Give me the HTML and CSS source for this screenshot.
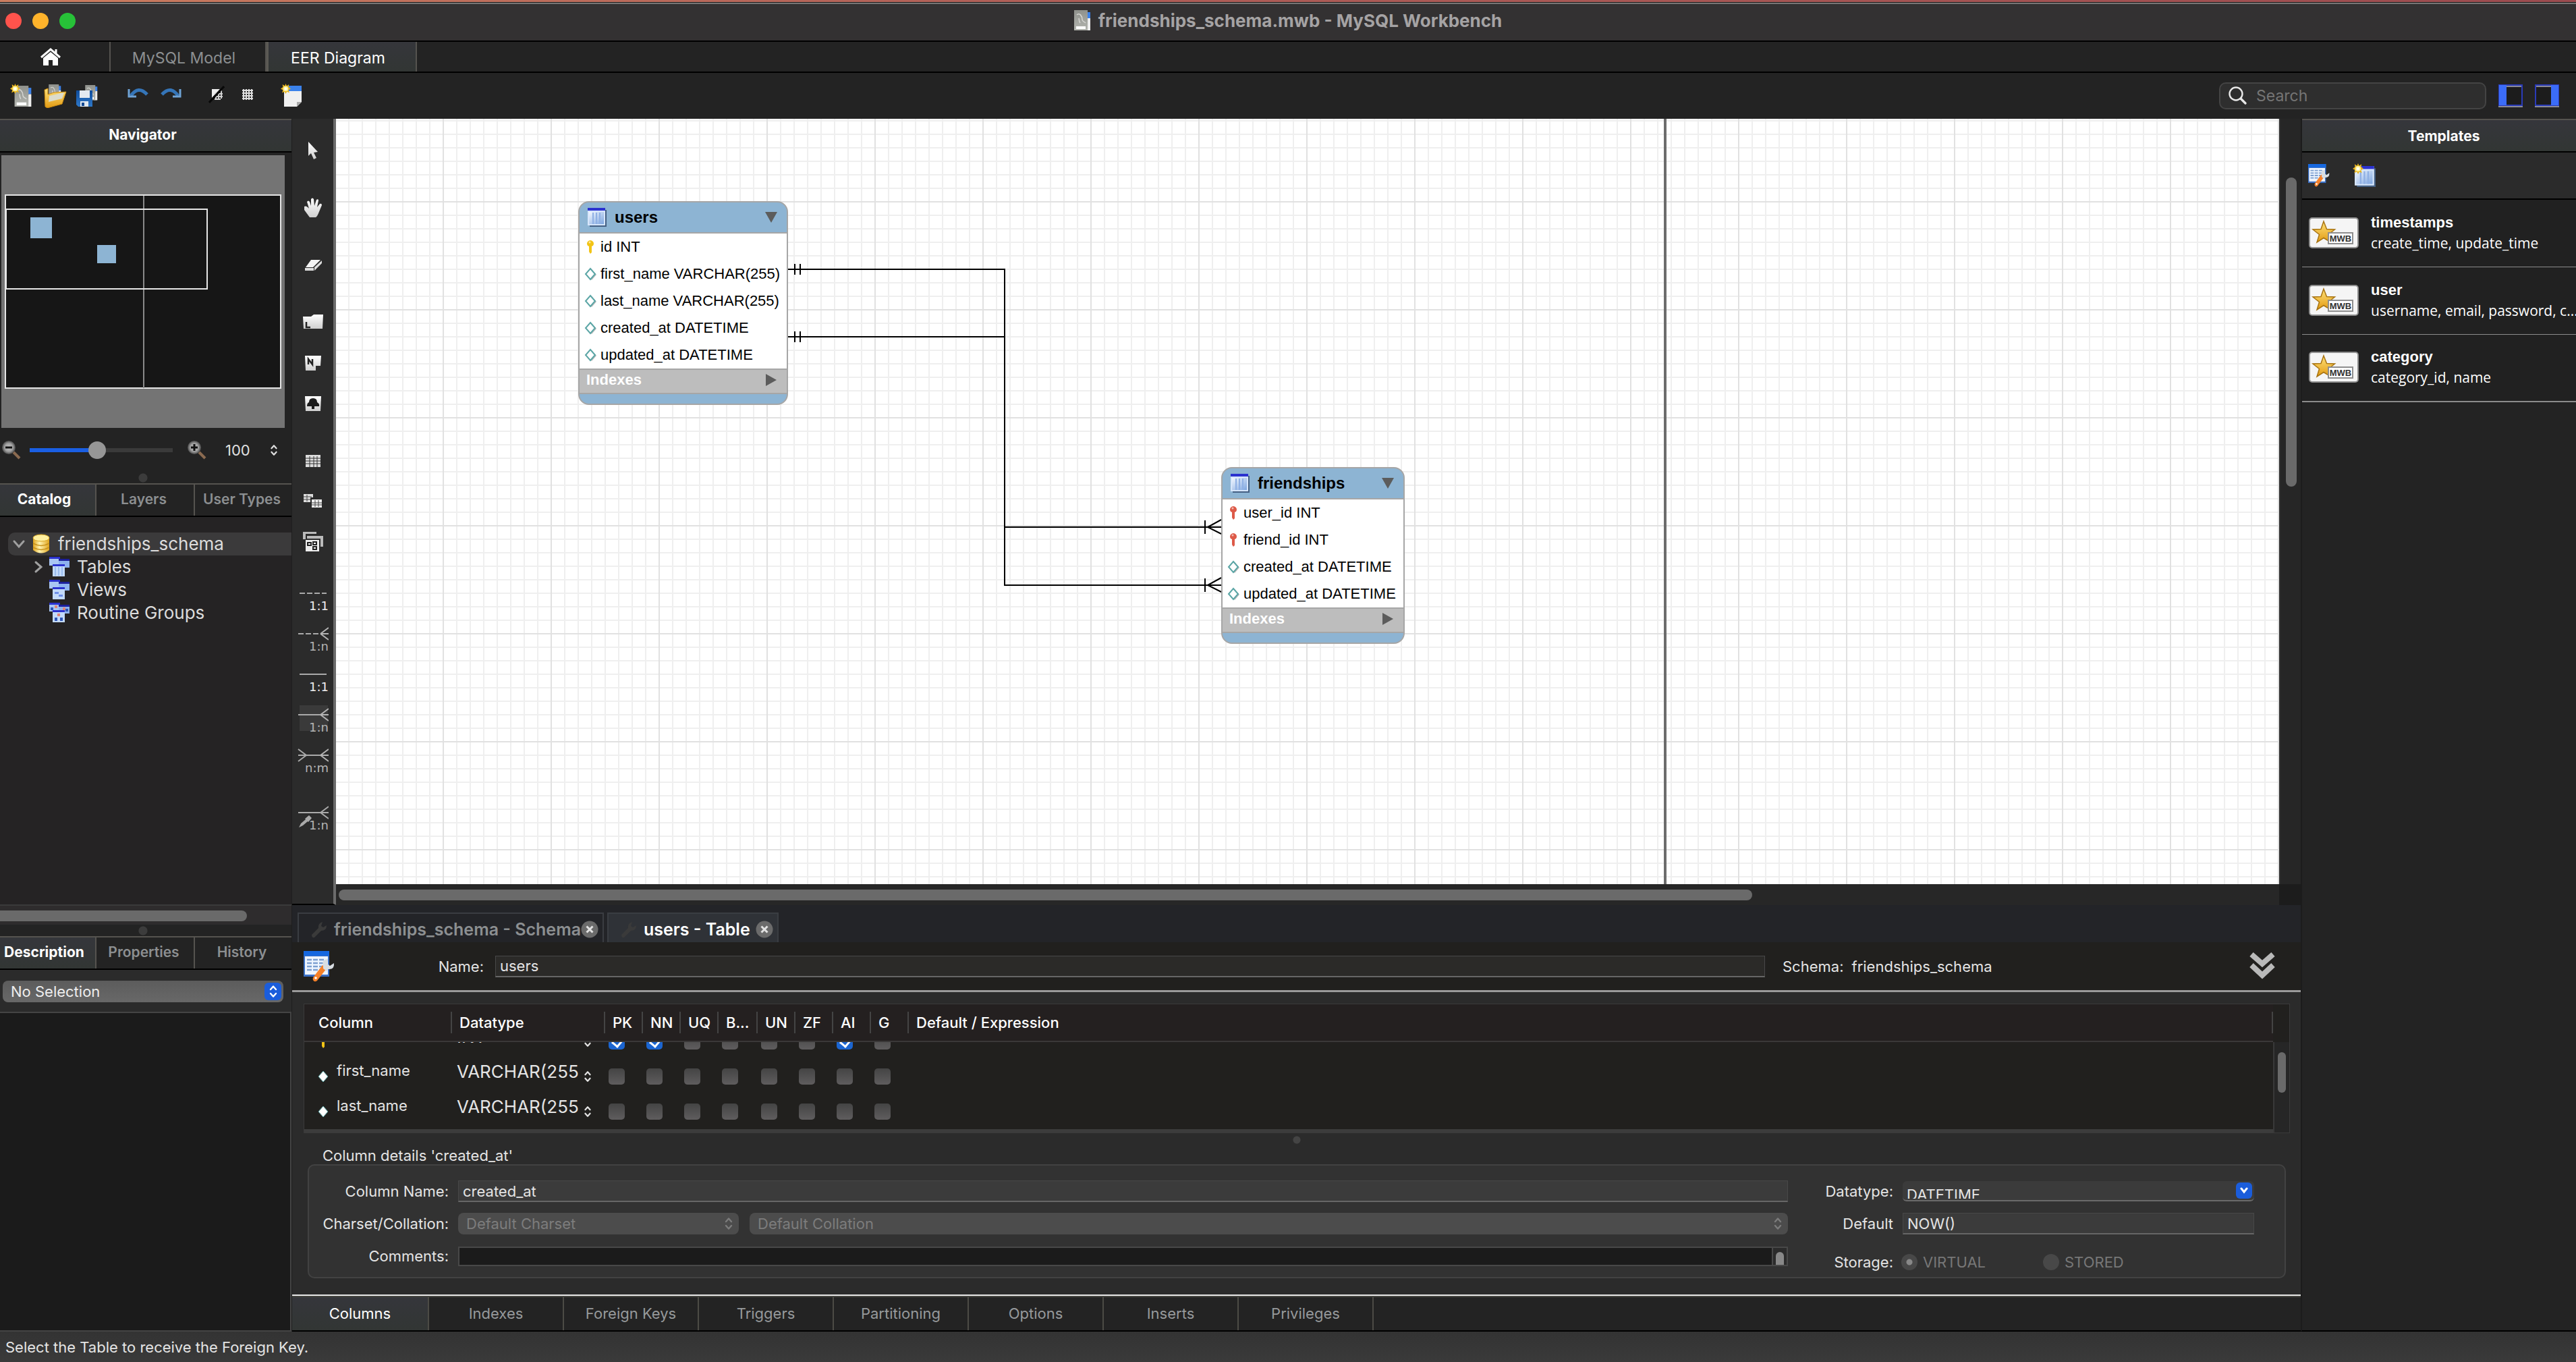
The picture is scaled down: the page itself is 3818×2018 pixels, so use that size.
FILE: index.html
```html
<!DOCTYPE html>
<html lang="en">
<head>
<meta charset="utf-8">
<title>friendships_schema.mwb - MySQL Workbench</title>
<link rel="stylesheet" href="styles.css">
</head>
<body>
<svg class="defs" aria-hidden="true">
  <defs>
    <linearGradient id="g-blue" x1="0" y1="0" x2="1" y2="1"><stop offset="0" stop-color="#f2f7ff"/><stop offset="1" stop-color="#7ea6e0"/></linearGradient>
    <linearGradient id="g-grey" x1="0" y1="0" x2="0" y2="1"><stop offset="0" stop-color="#8f918c"/><stop offset="1" stop-color="#b4b6b0"/></linearGradient>
    <linearGradient id="g-white" x1="0" y1="0" x2="0" y2="1"><stop offset="0" stop-color="#fff"/><stop offset="1" stop-color="#cfcfcf"/></linearGradient>
    <linearGradient id="g-gold" x1="0" y1="0" x2="0" y2="1"><stop offset="0" stop-color="#ffe27a"/><stop offset="1" stop-color="#e29a12"/></linearGradient>
    <linearGradient id="g-db" x1="0" y1="0" x2="1" y2="0"><stop offset="0" stop-color="#e0a41c"/><stop offset=".4" stop-color="#fff3b0"/><stop offset="1" stop-color="#e0a41c"/></linearGradient>
    <linearGradient id="g-disk" x1="0" y1="0" x2="0" y2="1"><stop offset="0" stop-color="#0f4d9e"/><stop offset="1" stop-color="#2f78c8"/></linearGradient>
    <radialGradient id="g-lens"><stop offset="0" stop-color="#c8c8c8"/><stop offset=".6" stop-color="#a0a0a0"/><stop offset="1" stop-color="#4a4a4a"/></radialGradient>
    <symbol id="spark" viewBox="0 0 14 14">
      <path d="M7 0l1.4 3L11.5 1l-.6 3.400L14 7l-3.100 1.800L12 12.500 8.600 11 7 14l-1.600-3L2 12.500l1.100-3.700L0 7l3.100-2.400L2.500 1l3.100 2z" fill="#e8b51d"/>
      <circle cx="7" cy="7" r="3.600" fill="#fff4a0"/><circle cx="7" cy="7" r="1.800" fill="#fff"/>
    </symbol>
    <symbol id="model" viewBox="0 0 26 32">
      <path d="M15 3h9v9h-9z" fill="#3b82ea"/><path d="M20 12h4v18h-6z" fill="#eee"/>
      <path d="M0 0h20v30H0z" fill="url(#g-grey)"/><path d="M3 24h14v4H3z" fill="#fff"/>
      <path d="M4 7c4-4 8 2 8 7 0 3 3 3 5 5M7 12c1 4 0 5 2 7" fill="none" stroke="#d6d6d2" stroke-width="1.500"/>
    </symbol>
    <symbol id="table" viewBox="0 0 28 28">
      <path d="M3 3h25v25H3z" fill="#456083"/><path d="M0 0h26v26H0z" fill="#d7e6fb"/>
      <path d="M2 6h22v18H2z" fill="url(#g-blue)"/><path d="M0 0h26v4H0z" fill="#2b32cf"/>
      <path d="M8 7v17M13 7v17M18 7v17" stroke="#8fb0e4" stroke-width="2"/>
    </symbol>
    <symbol id="tables" viewBox="0 0 30 30">
      <path d="M0 0h16v13H0z" fill="#a9c5f2"/><path d="M0 0h16v3H0z" fill="#2b32cf"/>
      <path d="M14 3h16v13H14z" fill="#8eb2ee"/><path d="M14 3h16v3H14z" fill="#1c1f9a"/>
      <path d="M5 11h18v18H5z" fill="#c3dafa"/><path d="M5 11h18v3H5z" fill="#2b32cf"/>
    </symbol>
    <symbol id="diamond" viewBox="0 0 20 20">
      <path d="M11 3l7 8-7 8-7-8z" fill="#bbb"/><path d="M9 2l7 8-7 8-7-8z" fill="#fff" stroke="#5aa5a5" stroke-width="2"/>
    </symbol>
    <symbol id="key" viewBox="0 0 20 22">
      <path d="M5 3q4-4 8 0 2 3 0 6l-2 1v9l-2 2-2-3v-8L5 9q-2-3 0-6z" fill="currentColor"/><circle cx="8" cy="4" r="1.500" fill="#fff" opacity=".6"/>
    </symbol>
    <symbol id="updown" viewBox="0 0 12 20"><path d="M2 7l4-4.500L10 7M2 13l4 4.500 4-4.500" fill="none" stroke="currentColor" stroke-width="2.400" stroke-linecap="round" stroke-linejoin="round"/></symbol>
    <symbol id="tablewrench" viewBox="0 0 46 46">
      <path d="M0 0h38v38H0z" fill="#3a6fc4"/><path d="M0 0h38v7H0z" fill="#1668e0"/><path d="M2 8h34v27H2z" fill="#eef5ff"/>
      <path d="M5 13h27M5 18h27M5 23h27M5 28h20" stroke="#7c9fd0" stroke-width="2.500" stroke-dasharray="7 2"/>
      <path d="M28 21l6 5-14 18q-4 3-6-1-1-3 1-5z" fill="#f5812a"/><circle cx="18" cy="40" r="1.800" fill="#fff"/>
      <path d="M29 21q-3-8 7-9l-1 7 4 3 6-4q1 10-9 9l-2 3-5-4z" fill="#d8dde2"/>
    </symbol>
    <symbol id="mag" viewBox="0 0 30 30">
      <path d="M18 18l9 9" stroke="#8a6a50" stroke-width="4"/><circle cx="11" cy="11" r="10" fill="url(#g-lens)"/>
    </symbol>
    <symbol id="close" viewBox="0 0 26 26"><circle cx="13" cy="13" r="12.500" fill="#6b6b6b"/><path d="M8.500 8.500l9 9M17.500 8.500l-9 9" stroke="#e2e2e2" stroke-width="3"/></symbol>
    <symbol id="wrench" viewBox="0 0 26 26"><path d="M3 21L13 11q-1-7 6-9l-2 6 3 2 5-3q0 8-8 8L7 25q-4 1-4-4z" fill="currentColor"/></symbol>
    <symbol id="mwb" viewBox="0 0 74 46">
      <rect x="1" y="1" width="72" height="44" rx="4" fill="#f5f5f5" stroke="#8e8e8e" stroke-width="2"/>
      <path d="M22 6l4.500 11.500 12 .5-9.500 7.500 3.500 11.500L22 30.500 12 37l3.500-11.500L6 18l12-.5z" fill="url(#g-gold)" stroke="#a87412" stroke-width="1.500"/>
      <rect x="29" y="23" width="36" height="16" fill="#fff" stroke="#8e8e8e" stroke-width="2"/>
      <text x="47" y="36" font-family="Liberation Sans" font-size="13" font-weight="700" text-anchor="middle" fill="#333">MWB</text>
    </symbol>
    <symbol id="foot" viewBox="0 0 46 20"><path d="M34 10L46 1M34 10h12M34 10l12 9" fill="none" stroke="currentColor" stroke-width="2"/></symbol>
  </defs>
</svg>

<div class="desktop-strip"></div>
<header class="titlebar">
  <div class="lights"><button class="lamp red" aria-label="Close window"></button><button class="lamp amber" aria-label="Minimise window"></button><button class="lamp green" aria-label="Zoom window"></button></div>
  <h1><svg width="26" height="32"><use href="#model"/></svg>friendships_schema.mwb - MySQL Workbench</h1>
</header>

<nav class="doc-tabs">
  <button class="home" aria-label="Home"><svg width="32" height="28" viewBox="0 0 32 28"><path d="M2 15L16 3l14 12M24 3v6" fill="none" stroke="#fff" stroke-width="3"/><path d="M16 7l11 9v11h-8v-8h-6v8H5V16z" fill="#fff"/></svg></button>
  <button class="doc-tab">MySQL Model</button>
  <button class="doc-tab active">EER Diagram</button>
</nav>

<div class="toolbar">
  <div class="tb-group">
    <button aria-label="New model"><svg width="36" height="36" viewBox="0 0 36 36"><use href="#model" x="5" y="3" width="30" height="33"/><use href="#spark" width="15" height="15"/></svg></button>
    <button aria-label="Open model"><svg width="34" height="36" viewBox="0 0 34 36"><use href="#model" x="6" y="1" width="22" height="24"/><path d="M1 9l5-2v9l9-3 18-1-6 18-22 6-3-2z" fill="url(#g-gold)" stroke="#c98a10"/><path d="M8 18l22-5-3 9-20 5z" fill="#dcdccb"/></svg></button>
    <button aria-label="Save model"><svg width="36" height="36" viewBox="0 0 36 36"><use href="#model" x="12" y="2" width="22" height="24"/><path d="M0 10h24v24H3l-3-3z" fill="url(#g-disk)"/><path d="M5 10h15v11H5z" fill="#e4e9f0"/><path d="M6 26h12v8H6z" fill="#dfe7f0"/><path d="M8 28h4v5H8z" fill="#134a94"/></svg></button>
  </div>
  <div class="tb-group">
    <button aria-label="Undo"><svg width="32" height="20" viewBox="0 0 32 20"><path d="M5 12Q16-4 29 10" fill="none" stroke="#3575b8" stroke-width="5"/><path d="M2 2v11h11" fill="none" stroke="#6fa3d6" stroke-width="3"/></svg></button>
    <button aria-label="Redo"><svg width="32" height="20" viewBox="0 0 32 20"><path d="M27 12Q16-4 3 10" fill="none" stroke="#3575b8" stroke-width="5"/><path d="M30 2v11H19" fill="none" stroke="#6fa3d6" stroke-width="3"/></svg></button>
  </div>
  <div class="tb-group grids">
    <button aria-label="Toggle grid"><svg width="24" height="26" viewBox="0 0 24 26"><path d="M5 5h12L5 18z" fill="#eee"/><path d="M9 12h12M9 16h12M9 20h9M11 10v11M15 8v13M19 7v12" stroke="#cfcfcf" stroke-width="2"/><path d="M1 25L23 1" stroke="#080808" stroke-width="3"/></svg></button>
    <button aria-label="Align to grid"><svg width="18" height="18" viewBox="0 0 18 18"><path d="M1 3h16M1 7h16M1 11h16M1 15h16M3 1v16M7 1v16M11 1v16M15 1v16" stroke="#ddd" stroke-width="2"/></svg></button>
  </div>
  <button aria-label="New diagram"><svg width="32" height="36" viewBox="0 0 32 36"><path d="M5 3h26v24l-7 7H5z" fill="#f0f0f0"/><path d="M5 3h26v8H5z" fill="#3b82ea"/><path d="M31 27h-7v7z" fill="#aaa"/><use href="#spark" width="15" height="15"/></svg></button>
  <div class="tb-right">
    <label class="search"><svg width="28" height="28" viewBox="0 0 28 28"><circle cx="11" cy="11" r="9.500" fill="none" stroke="#e8e8e8" stroke-width="2.400"/><path d="M18 18l7 7" stroke="#e8e8e8" stroke-width="3.400" stroke-linecap="round"/></svg><input type="search" placeholder="Search" aria-label="Search"></label>
    <button aria-label="Toggle left sidebar"><svg width="36" height="34" viewBox="0 0 36 34"><path d="M1 1h34v30H1z" fill="#1c1c1c" stroke="#2a3bb8" stroke-width="2"/><path d="M1 1h11v30H1z" fill="#3b6cf8"/><path d="M0 33h36M12 3h22" stroke="#8a8a96" stroke-width="2"/></svg></button>
    <button aria-label="Toggle right sidebar"><svg width="36" height="34" viewBox="0 0 36 34"><path d="M1 1h34v30H1z" fill="#1c1c1c" stroke="#2a3bb8" stroke-width="2"/><path d="M24 1h11v30H24z" fill="#3b6cf8"/><path d="M0 33h36M2 3h22" stroke="#8a8a96" stroke-width="2"/></svg></button>
  </div>
</div>

<main class="workspace">
  <aside class="left">
    <h2 class="panel-head">Navigator</h2>
    <svg class="minimap" viewBox="0 0 420 404">
      <rect width="420" height="404" fill="#747474"/>
      <rect x="6" y="59" width="408" height="286" fill="#161616" stroke="#e6e6e6" stroke-width="2"/>
      <path d="M211 60v285" stroke="#8a8a8a" stroke-width="2"/>
      <rect x="7" y="80" width="298" height="118" fill="none" stroke="#e6e6e6" stroke-width="2"/>
      <rect x="43" y="92" width="32" height="31" fill="#8db4d3"/><rect x="142" y="133" width="28" height="27" fill="#8db4d3"/>
    </svg>
    <div class="zoom-row">
      <button aria-label="Zoom out"><svg width="30" height="30" viewBox="0 0 30 30"><use href="#mag"/><path d="M6 11h10" stroke="#111" stroke-width="3"/></svg></button>
      <input type="range" min="0" max="100" value="47" aria-label="Zoom">
      <button aria-label="Zoom in"><svg width="30" height="30" viewBox="0 0 30 30"><use href="#mag"/><path d="M6 11h10M11 6v10" stroke="#111" stroke-width="3"/></svg></button>
      <label class="zoom-value"><select aria-label="Zoom percent"><option>100</option></select><svg width="12" height="18"><use href="#updown"/></svg></label>
    </div>
    <div class="splitter"></div>
    <div class="side-tabs"><button class="active">Catalog</button><button>Layers</button><button>User Types</button></div>
    <ul class="tree">
      <li class="node root"><svg width="20" height="14" viewBox="0 0 20 14"><path d="M3 3l7 8 7-8" fill="none" stroke="#a0a0a0" stroke-width="3" stroke-linecap="round"/></svg><svg width="28" height="30" viewBox="0 0 28 30"><path d="M2 6v18q12 9 24 0V6z" fill="url(#g-db)"/><ellipse cx="14" cy="6" rx="12" ry="5" fill="#fff0a0" stroke="#d9a520"/><path d="M2 14q12 7 24 0M2 20q12 7 24 0" fill="none" stroke="#c8921a" stroke-width="1.500"/></svg>friendships_schema</li>
      <li class="node"><svg width="14" height="20" viewBox="0 0 14 20"><path d="M3 3l8 7-8 7" fill="none" stroke="#a0a0a0" stroke-width="3" stroke-linecap="round"/></svg><svg width="30" height="30" viewBox="0 0 30 30"><use href="#tables"/><path d="M9 15v13M14 15v13M19 15v13" stroke="#8fb4ea" stroke-width="1.500"/></svg>Tables</li>
      <li class="node"><svg width="14" height="20"></svg><svg width="30" height="30" viewBox="0 0 30 30"><use href="#tables"/><path d="M8 18h6v3H8zM14 22h6v3h-6z" fill="#6f8fe8"/></svg>Views</li>
      <li class="node"><svg width="14" height="20"></svg><svg width="30" height="30" viewBox="0 0 30 30"><use href="#tables"/><path d="M8 22h4v5H8zM16 22h4v5h-4zM2 7h4v4H2zM24 9h4v4h-4z" fill="#2d55b8"/><path d="M12 16h4v4h-4zM8 4h4v4H8zM20 7h4v4h-4z" fill="#e0857a"/></svg>Routine Groups</li>
    </ul>
    <div class="tree-scroll"><div class="thumb"></div></div>
    <div class="splitter"></div>
    <div class="side-tabs"><button class="active">Description</button><button>Properties</button><button>History</button></div>
    <div class="select-row"><label class="popup lit"><select aria-label="Selected object"><option>No Selection</option></select><span class="knob"><svg width="12" height="20"><use href="#updown"/></svg></span></label></div>
    <div class="description"></div>
  </aside>

  <section class="center">
    <div class="stage">
      <div class="palette">
        <div><button aria-label="Select"><svg width="24" height="28" viewBox="0 0 24 28"><path d="M5 1l14 15-6 1 4 8-4 2-4-9-4 4z" fill="url(#g-white)"/></svg></button></div>
        <div><button aria-label="Pan"><svg width="28" height="30" viewBox="0 0 28 30"><path d="M1 13q3-2 7 3L5 6q2-3 4 0l2 6 0-10q2-3 4 0l1 10 3-9q3-2 3 1l-2 10 4-5q3-1 3 2l-5 12q-2 5-4 6h-9q-3-4-8-11z" fill="url(#g-white)"/></svg></button></div>
        <div><button aria-label="Erase"><svg width="30" height="22" viewBox="0 0 30 22"><path d="M12 3h14L15 14H4z" fill="#f4f4f4"/><path d="M3 15h13v4H3zM17 14L28 4v4L17 19z" fill="#ddd"/></svg></button></div>
        <div>
          <button aria-label="Layer"><svg width="32" height="26" viewBox="0 0 32 26"><path d="M1 4h12l4-3h14l-1 21H2z" fill="url(#g-white)"/><path d="M6 12v8h6" fill="none" stroke="#222" stroke-width="2.500"/></svg></button>
          <button aria-label="Note"><svg width="26" height="24" viewBox="0 0 26 24"><path d="M1 1h24l-1 15h-7v7H2z" fill="url(#g-white)"/><path d="M6 14V6l6 8V6" fill="none" stroke="#222" stroke-width="2.500"/></svg></button>
          <button aria-label="Image"><svg width="26" height="24" viewBox="0 0 26 24"><path d="M1 1h24l-1 22H2z" fill="url(#g-white)"/><path d="M4 16q0-5 3-6 0-6 6-6t6 6q4 2 3 6h-7v4h-4v-4z" fill="#1c1c1c"/></svg></button>
        </div>
        <div>
          <button aria-label="Table"><svg width="24" height="22" viewBox="0 0 24 22"><path d="M1 2h22v18H1z" fill="#ddd"/><path d="M1 7h22M1 11h22M1 15h22M7 4v16M13 4v16M18 4v16" stroke="#333" stroke-width="1"/></svg></button>
          <button aria-label="View"><svg width="28" height="24" viewBox="0 0 28 24"><path d="M0 1h14v5h-4v7H0z" fill="#ddd"/><path d="M12 9h15v12H12z" fill="#eee"/><path d="M0 5h12M0 9h10M5 2v10M12 14h15M12 17h15M17 10v10M22 10v10" stroke="#444" stroke-width="1"/></svg></button>
          <button aria-label="Routine group"><svg width="32" height="32" viewBox="0 0 32 32"><path d="M1 1h20v3H5v8H1zM7 7h24v16h-4V11H7z" fill="#bbb"/><path d="M5 13h20v17H5z" fill="#eee"/><path d="M8 17h5v4H8zM16 16h5v4h-5zM16 23h5v4h-5z" fill="none" stroke="#222" stroke-width="2"/></svg></button>
        </div>
        <div class="relations">
          <button><svg width="46" height="20" viewBox="0 0 46 20"><path d="M3 10h40" stroke="#aaa" stroke-width="2" stroke-dasharray="8 3"/></svg><span class="bright">1:1</span></button>
          <button><svg width="46" height="20" viewBox="0 0 46 20"><path d="M1 10h34" stroke="#aaa" stroke-width="2" stroke-dasharray="8 3"/><use href="#foot"/></svg><span>1:n</span></button>
          <button><svg width="46" height="20" viewBox="0 0 46 20"><path d="M3 10h40" stroke="#aaa" stroke-width="2"/></svg><span class="bright">1:1</span></button>
          <button class="chosen"><svg width="46" height="20" viewBox="0 0 46 20"><path d="M1 10h34" stroke="#aaa" stroke-width="2"/><use href="#foot"/></svg><span>1:n</span></button>
          <button><svg width="46" height="20" viewBox="0 0 46 20"><path d="M1 10h34M1 1l12 9L1 19" fill="none" stroke="#aaa" stroke-width="2"/><use href="#foot"/></svg><span>n:m</span></button>
        </div>
        <div class="relations"><button><svg width="46" height="34" viewBox="0 0 46 34"><path d="M1 10h34M34 10L46 1M34 10h12M34 10l12 9" fill="none" stroke="#aaa" stroke-width="2"/><path d="M2 32l3-6 7-6 3 3-7 6zM11 19l6-5 4 4-5 6z" fill="#aaa"/></svg><span class="pick">1:n</span></button></div>
      </div>

      <div class="canvas">
        <div class="page-edge"></div>
        <svg class="links" width="1320" height="720" viewBox="0 0 1320 720" fill="none" stroke="#000" stroke-width="2">
          <path d="M670 223h321v468h321M670 323h321M991 605h321M680 215v16M688 215v16M680 315v16M688 315v16M1288 595v20M1288 681v20"/>
          <path d="M1312 594l-20 11 20 10M1312 680l-20 11 20 10" stroke-width="2"/>
        </svg>
        <article class="entity users">
          <h3><svg width="28" height="28"><use href="#table"/></svg>users<svg class="caret" width="18" height="16" viewBox="0 0 18 16"><path d="M0 0h18L9 16z" fill="#5c5c5c"/></svg></h3>
          <ul>
            <li><svg class="gold" width="20" height="22"><use href="#key"/></svg>id INT</li>
            <li><svg width="20" height="20"><use href="#diamond"/></svg>first_name VARCHAR(255)</li>
            <li><svg width="20" height="20"><use href="#diamond"/></svg>last_name VARCHAR(255)</li>
            <li><svg width="20" height="20"><use href="#diamond"/></svg>created_at DATETIME</li>
            <li><svg width="20" height="20"><use href="#diamond"/></svg>updated_at DATETIME</li>
          </ul>
          <p>Indexes<svg class="caret" width="16" height="18" viewBox="0 0 16 18"><path d="M0 0v18l16-9z" fill="#5c5c5c"/></svg></p>
        </article>
        <article class="entity friendships">
          <h3><svg width="28" height="28"><use href="#table"/></svg>friendships<svg class="caret" width="18" height="16" viewBox="0 0 18 16"><path d="M0 0h18L9 16z" fill="#5c5c5c"/></svg></h3>
          <ul>
            <li><svg class="red-key" width="20" height="22"><use href="#key"/></svg>user_id INT</li>
            <li><svg class="red-key" width="20" height="22"><use href="#key"/></svg>friend_id INT</li>
            <li><svg width="20" height="20"><use href="#diamond"/></svg>created_at DATETIME</li>
            <li><svg width="20" height="20"><use href="#diamond"/></svg>updated_at DATETIME</li>
          </ul>
          <p>Indexes<svg class="caret" width="16" height="18" viewBox="0 0 16 18"><path d="M0 0v18l16-9z" fill="#5c5c5c"/></svg></p>
        </article>
      </div>
      <div class="vscroll"><div class="thumb"></div></div>
      <div class="hscroll"><div class="thumb"></div></div>
      <div class="corner"></div>
    </div>

    <div class="editor-tabs">
      <div class="editor-tab"><svg width="26" height="26"><use href="#wrench"/></svg><button>friendships_schema - Schema</button><button class="x" aria-label="Close schema tab"><svg width="26" height="26"><use href="#close"/></svg></button></div>
      <div class="editor-tab active"><svg width="26" height="26"><use href="#wrench"/></svg><button>users - Table</button><button class="x" aria-label="Close table tab"><svg width="26" height="26"><use href="#close"/></svg></button></div>
    </div>
    <div class="editor-head">
      <svg width="46" height="46"><use href="#tablewrench"/></svg>
      <label for="tname">Name:</label><input id="tname" class="field" type="text" value="users">
      <p class="schema"><span>Schema:</span><span>friendships_schema</span></p>
      <button aria-label="Collapse editor"><svg width="38" height="42" viewBox="0 0 38 42"><path d="M3 3l16 14L35 3M3 19l16 15 16-15" fill="none" stroke="#b9b9b9" stroke-width="8"/></svg></button>
    </div>

    <div class="editor-body">
      <div class="columns-grid">
        <table>
          <colgroup><col class="c-name"><col class="c-type"><col class="c-flag"><col class="c-flag"><col class="c-flag"><col class="c-bin"><col class="c-flag"><col class="c-flag"><col class="c-flag"><col class="c-flag"><col></colgroup>
          <thead><tr><th>Column</th><th>Datatype</th><th>PK</th><th>NN</th><th>UQ</th><th>B...</th><th>UN</th><th>ZF</th><th>AI</th><th>G</th><th>Default / Expression</th></tr></thead>
          <tbody>
            <tr class="cut">
              <td><div><span class="name"><svg class="gold" width="20" height="22"><use href="#key"/></svg></span></div></td>
              <td><div><label class="type"><select aria-label="Datatype of id"><option>INT</option></select><svg width="12" height="18"><use href="#updown"/></svg></label></div></td>
              <td><div><input type="checkbox" checked aria-label="id PK"></div></td><td><div><input type="checkbox" checked aria-label="id NN"></div></td><td><div><input type="checkbox" aria-label="id UQ"></div></td><td><div><input type="checkbox" aria-label="id B"></div></td><td><div><input type="checkbox" aria-label="id UN"></div></td><td><div><input type="checkbox" aria-label="id ZF"></div></td><td><div><input type="checkbox" checked aria-label="id AI"></div></td><td><div><input type="checkbox" aria-label="id G"></div></td><td></td>
            </tr>
            <tr>
              <td><span class="name"><svg width="18" height="20" viewBox="0 0 18 20"><path d="M9 2l7 8-7 8-7-8z" fill="#fff" stroke="#5aa5a5"/></svg><span>first_name</span></span></td>
              <td><label class="type"><select aria-label="Datatype of first_name"><option>VARCHAR(255</option></select><svg width="12" height="18"><use href="#updown"/></svg></label></td>
              <td><input type="checkbox" aria-label="first_name PK"></td><td><input type="checkbox" aria-label="first_name NN"></td><td><input type="checkbox" aria-label="first_name UQ"></td><td><input type="checkbox" aria-label="first_name B"></td><td><input type="checkbox" aria-label="first_name UN"></td><td><input type="checkbox" aria-label="first_name ZF"></td><td><input type="checkbox" aria-label="first_name AI"></td><td><input type="checkbox" aria-label="first_name G"></td><td></td>
            </tr>
            <tr>
              <td><span class="name"><svg width="18" height="20" viewBox="0 0 18 20"><path d="M9 2l7 8-7 8-7-8z" fill="#fff" stroke="#5aa5a5"/></svg><span>last_name</span></span></td>
              <td><label class="type"><select aria-label="Datatype of last_name"><option>VARCHAR(255</option></select><svg width="12" height="18"><use href="#updown"/></svg></label></td>
              <td><input type="checkbox" aria-label="last_name PK"></td><td><input type="checkbox" aria-label="last_name NN"></td><td><input type="checkbox" aria-label="last_name UQ"></td><td><input type="checkbox" aria-label="last_name B"></td><td><input type="checkbox" aria-label="last_name UN"></td><td><input type="checkbox" aria-label="last_name ZF"></td><td><input type="checkbox" aria-label="last_name AI"></td><td><input type="checkbox" aria-label="last_name G"></td><td></td>
            </tr>
          </tbody>
        </table>
        <div class="grid-scroll"><div class="thumb"></div></div>
      </div>
      <div class="splitter mid"></div>
      <h3 class="details-title">Column details 'created_at'</h3>
      <form class="details">
        <div class="d-left">
          <div class="row"><label for="cname">Column Name:</label><input id="cname" class="field" type="text" value="created_at"></div>
          <div class="row"><label for="charset">Charset/Collation:</label>
            <span class="popup charset"><select id="charset" disabled><option>Default Charset</option></select><svg width="12" height="20"><use href="#updown"/></svg></span>
            <span class="popup collation"><select aria-label="Collation" disabled><option>Default Collation</option></select><svg width="12" height="20"><use href="#updown"/></svg></span></div>
          <div class="row"><label for="comments">Comments:</label><div class="comments"><textarea id="comments"></textarea><div class="mini"><div class="thumb"></div></div></div></div>
        </div>
        <div class="d-right">
          <div class="row"><label for="dtype">Datatype:</label><div class="combo"><div class="combo-text"><input id="dtype" type="text" value="DATETIME"></div><button type="button" aria-label="Show datatypes"><svg width="12" height="10" viewBox="0 0 12 10"><path d="M2 2l4 5 4-5" fill="none" stroke="#fff" stroke-width="3" stroke-linecap="round"/></svg></button></div></div>
          <div class="row"><label for="dflt">Default</label><input id="dflt" class="field" type="text" value="NOW()"></div>
          <div class="row storage"><span class="lbl">Storage:</span><label><input type="radio" name="st" checked disabled>VIRTUAL</label><label><input type="radio" name="st" disabled>STORED</label></div>
        </div>
      </form>
    </div>
    <nav class="bottom-tabs"><button class="active">Columns</button><button>Indexes</button><button>Foreign Keys</button><button>Triggers</button><button>Partitioning</button><button>Options</button><button>Inserts</button><button>Privileges</button></nav>
  </section>

  <aside class="right">
    <h2 class="panel-head">Templates</h2>
    <div class="tpl-tools"><button aria-label="Edit templates"><svg width="32" height="34" viewBox="0 0 46 46" preserveAspectRatio="none"><use href="#tablewrench" width="46" height="46"/></svg></button><button aria-label="New table from template"><svg width="34" height="36" viewBox="0 0 34 36"><use href="#table" x="3" y="4" width="31" height="31"/><use href="#spark" width="16" height="16"/></svg></button></div>
    <ul class="templates">
      <li><svg width="74" height="46"><use href="#mwb"/></svg><div><h3>timestamps</h3><p>create_time, update_time</p></div></li>
      <li><svg width="74" height="46"><use href="#mwb"/></svg><div><h3>user</h3><p>username, email, password, c...</p></div></li>
      <li><svg width="74" height="46"><use href="#mwb"/></svg><div><h3>category</h3><p>category_id, name</p></div></li>
    </ul>
  </aside>
</main>
<footer class="status">Select the Table to receive the Foreign Key.</footer>
</body>
</html>
```
FILE: styles.css
```css
* { box-sizing: border-box; }
body {
  margin: 0; height: 100vh; display: flex; flex-direction: column; overflow: hidden;
  background: #232323; color: #e4e4e4; font: 22px/28px Inter, "Liberation Sans", sans-serif;
}
h1, h2, h3, p, ul { margin: 0; padding: 0; font: inherit; }
ul { list-style: none; }
button, input, select, textarea { font: inherit; color: inherit; border: 0; background: none; padding: 0; margin: 0; border-radius: 0; }
button { display: flex; align-items: center; justify-content: center; }
select, input[type="checkbox"], input[type="radio"], input[type="range"], input[type="search"] { appearance: none; }
input, select { min-width: 0; }
svg { flex: none; display: block; }
.defs { position: absolute; width: 0; height: 0; }
.gold { color: #f2c416; }
.red-key { color: #dd5a48; }
.thumb { background: #6a6a6a; border-radius: 8px; }

/* window chrome */
.desktop-strip { height: 6px; flex: none; background: linear-gradient(#0000 3px, #1a1a1a 3px, #1a1a1a 4px, #777 4px), linear-gradient(90deg, #cb7d60, #b05f58 40%, #9c4c50); }
.titlebar { height: 56px; flex: none; display: grid; grid-template-columns: 1fr auto 1fr; align-items: center; padding: 0 8px 4px; background: #333132; border-bottom: 2px solid #000; }
.lights { display: flex; gap: 16px; }
.lamp { width: 24px; height: 24px; border-radius: 50%; }
.red { background: #ff534c; }
.amber { background: #ffb32b; }
.green { background: #27c138; }
.titlebar h1 { display: flex; align-items: center; gap: 10px; font-size: 26px; font-weight: 700; color: #a5a3a4; }

.doc-tabs { height: 46px; flex: none; display: flex; border-bottom: 2px solid #000; }
.doc-tabs button { border-right: 2px solid #55534f; padding-top: 4px; }
.doc-tabs .home { width: 164px; padding: 0 12px 0 0; }
.doc-tabs .doc-tab { width: 231px; font-size: 23px; color: #8c8f91; padding-right: 12px; }
.doc-tabs .doc-tab.active { width: 223px; color: #fff; border-left: 3px solid #5c5a54; background: linear-gradient(#35363b, #323634); }

.toolbar { height: 68px; flex: none; display: flex; align-items: center; padding: 0 25px 0 15px; }
.tb-group { display: flex; gap: 14px; margin-right: 40px; align-items: center; }
.tb-group + .tb-group { gap: 16px; padding-bottom: 4px; }
.tb-group.grids { gap: 25px; }
.tb-right { margin-left: auto; display: flex; align-items: center; gap: 18px; }
.search { width: 396px; height: 40px; display: flex; align-items: center; gap: 13px; padding: 0 12px; background: #2e2e2e; border: 2px solid #444; border-radius: 10px; }
.search input { width: 100%; font-size: 23px; outline: 0; }
.search input::placeholder { color: #757575; opacity: 1; }

.workspace { flex: 1; min-height: 0; display: flex; }
.status { height: 45px; flex: none; padding: 9px 8px; background: linear-gradient(#333, #3a3a3a); }

.panel-head { height: 50px; flex: none; padding-top: 8px; text-align: center; font-size: 21px; font-weight: 700; color: #fff; background: linear-gradient(#35363b, #323634); border-top: 2px solid #55534f; border-bottom: 2px solid #000; }
.left .panel-head { padding-right: 9px; }
.right .panel-head { padding-top: 10px; padding-left: 14px; }

/* left sidebar */
.left { width: 433px; flex: none; display: flex; flex-direction: column; border-right: 1px solid #1e1e1e; }
.minimap { width: 420px; height: 404px; margin: 4px 2px 0; }
.zoom-row { display: flex; align-items: center; height: 65px; padding-left: 2px; }
.zoom-row input { width: 212px; height: 26px; margin: 0 21px 0 12px; background: linear-gradient(90deg, #1a5fe4 47%, #3a3a3a 47%) center / 100% 6px no-repeat; }
.zoom-row input::-webkit-slider-thumb { appearance: none; width: 26px; height: 26px; border-radius: 50%; background: #969696; }
.zoom-value { margin-left: 27px; display: flex; align-items: center; gap: 6px; color: #e0e0e0; }
.zoom-value select { width: 60px; }
.splitter { height: 17px; flex: none; background: radial-gradient(circle at 212px 9px, #3c3c3c 6px, #0000 7px); }
.splitter.mid { height: 20px; background: radial-gradient(circle at center, #444 5px, #0000 6px); }
.side-tabs { height: 50px; flex: none; display: grid; grid-template-columns: 141px 146px 145px; border-top: 2px solid #55534f; border-bottom: 2px solid #000; }
.side-tabs button { font-size: 21px; font-weight: 600; color: #8c8f91; border-left: 2px solid #55534f; padding: 0 4px 2px 0; white-space: nowrap; }
.side-tabs button.active { color: #fff; font-weight: 700; border-left: 0; background: linear-gradient(#35363b, #323634); padding-right: 10px; }
.tree { flex: 1; padding: 23px 0 0 12px; background: #252324; font-size: 26px; color: #dcdcdc; }
.node { height: 34px; display: flex; align-items: center; gap: 9px; padding-left: 38px; }
.node svg + svg { margin-right: 2px; }
.node.root { padding-left: 6px; background: #3b3a3b; border-radius: 10px 0 0 10px; }
.tree-scroll { height: 30px; flex: none; background: #2e2c2d; border-top: 2px solid #3a3a3a; padding-top: 7px; }
.tree-scroll .thumb { width: 366px; height: 16px; border-radius: 0 8px 8px 0; }
.select-row { height: 62px; flex: none; padding: 16px 12px 0 4px; background: #2b2b2b; }
.popup { position: relative; height: 32px; display: flex; align-items: center; border-radius: 8px; background: #4c4c4c; color: #7c7c7c; }
.popup select { width: 100%; height: 32px; padding-left: 12px; opacity: 1; }
.popup > svg { position: absolute; right: 9px; pointer-events: none; }
.popup.lit { background: linear-gradient(#5c5c5c, #686868); color: #eee; }
.knob { position: absolute; right: 3px; width: 25px; height: 26px; border-radius: 6px; background: #1b5ddb; color: #fff; display: grid; place-items: center; pointer-events: none; }
.description { height: 474px; flex: none; background: #1b1b1b; border: 2px solid #444; border-left: 0; }

/* diagram stage */
.center { flex: 1; min-width: 0; display: flex; flex-direction: column; border-bottom: 2px solid #000; }
.stage { flex: 1; min-height: 0; display: grid; grid-template: 1fr 31px / 65px 1fr 32px; }
.palette { grid-row: 1 / 3; padding-top: 17px; display: flex; flex-direction: column; gap: 25px; background: #2b2b2b; border-right: 4px solid #6b6b6b; border-bottom: 2px solid #000; }
.palette button { width: 100%; height: 60px; }
.relations button { flex-direction: column; align-items: flex-end; padding: 0 7px 0 0; color: #b4b4b4; font: 18px/18px "DejaVu Sans", sans-serif; }
.relations .bright { color: #f0f0f0; }
.relations .pick { margin-top: -14px; }
.relations .chosen { background: radial-gradient(#3a3a3a, #3a3a3a) 11px 7px / 42px 38px no-repeat; }
.canvas {
  position: relative; overflow: hidden; background-color: #fff;
  background-image: linear-gradient(90deg, #e1e1e1 2px, #0000 2px), linear-gradient(#e1e1e1 2px, #0000 2px), linear-gradient(90deg, #efefef 2px, #0000 2px), linear-gradient(#efefef 2px, #0000 2px);
  background-size: 160px 160px, 160px 160px, 20px 20px, 20px 20px; background-position: -2px 122px;
}
.page-edge { position: absolute; left: 1968px; top: 0; bottom: 0; width: 4px; background: #6c6c6c; }
.links { position: absolute; left: 0; top: 0; }
.entity { position: absolute; border: 2px solid #a6a6a6; border-radius: 16px; background: #8db4d3; color: #000; font: 22px/40px "Liberation Sans", Arial, sans-serif; overflow: hidden; padding-bottom: 14px; }
.users { left: 359px; top: 122px; width: 311px; }
.friendships { left: 1312px; top: 516px; width: 272px; }
.entity h3 { height: 46px; display: flex; align-items: center; gap: 12px; padding: 0 14px 0 12px; font-size: 24px; font-weight: 700; border-bottom: 2px solid #a6a6a6; }
.entity ul { background: #fff; }
.entity li { height: 40px; display: flex; align-items: center; gap: 4px; padding-left: 7px; white-space: nowrap; }
.entity p { height: 38px; display: flex; align-items: center; padding: 0 15px 5px 10px; background: #bdbdbd; color: #fff; font-weight: 700; border: 2px solid #a6a6a6; border-width: 2px 0; }
.caret { margin-left: auto; }
.vscroll { background: #262626; border-left: 2px solid #303030; padding: 87px 0 0 8px; }
.vscroll .thumb { width: 16px; height: 458px; }
.hscroll { background: #272727; padding: 8px 4px; }
.hscroll .thumb { width: 2095px; max-width: 100%; height: 16px; }
.corner { background: #1c1c1c; }

/* table editor */
.editor-tabs { height: 55px; flex: none; display: flex; align-items: flex-end; gap: 5px; padding-left: 8px; background: #232428; }
.editor-tab { height: 44px; display: flex; align-items: center; border: 2px solid #3a3d42; border-bottom: 0; padding: 4px 6px 0 16px; gap: 10px; color: #3a3a3a; font-size: 25px; font-weight: 600; }
.editor-tab button { color: #8c8f91; white-space: nowrap; }
.editor-tab .x { margin-left: -10px; }
.editor-tab.active { background: #2f3237; }
.editor-tab.active button { color: #fff; }
.editor-tab.active .x { margin-left: -2px; }
.editor-head { height: 74px; flex: none; display: flex; align-items: center; padding: 0 38px 0 17px; background: #21201e; border-bottom: 3px solid #9b9b9b; }
.editor-head label { width: 221px; text-align: right; margin-right: 17px; }
.field { flex: 1; height: 32px; padding: 0 6px; background: #3b3b3b; border: 1px solid #484848; border-bottom: 2px solid #666; }
.editor-head .field { background: #2b2a28; }
.schema { width: 718px; padding-left: 26px; display: flex; gap: 12px; }
.editor-body { flex: none; background: #2b2b2b; padding: 17px 16px 24px 17px; border-bottom: 2px solid #e8e8e8; }
.columns-grid { display: flex; border: 1px solid #3a3a3a; background: #21201e; height: 192px; }
.columns-grid table { flex: 1; height: 190px; border-collapse: separate; border-spacing: 0; table-layout: fixed; border-bottom: 5px solid #3c3c3c; }
.c-name { width: 219px; }
.c-type { width: 227px; }
.c-flag { width: 56px; }
.c-bin { width: 58px; }
th { height: 56px; padding: 0 0 0 11px; text-align: left; font-weight: 500; color: #fff; white-space: nowrap; background: linear-gradient(#444, #444) right center / 2px 32px no-repeat #242020; border-bottom: 2px solid #3a3838; }
th:first-child { padding-left: 21px; }
td { height: 52px; padding: 0 0 0 5px; }
td > div { height: 25px; overflow: hidden; display: flex; flex-direction: column; justify-content: flex-end; padding-bottom: 14px; }
td > div > * { flex: none; }
tr.cut td { height: 25px; vertical-align: top; }
input[type="checkbox"] { display: block; width: 24px; height: 24px; border-radius: 5px; background: linear-gradient(#444, #5f5d5e); }
input[type="checkbox"]:checked { background: #1b65d0; }
input[type="checkbox"]:checked::after { content: ""; display: block; width: 9px; height: 14px; margin: 3px 0 0 8px; border: solid #fff; border-width: 0 3px 3px 0; transform: rotate(40deg); }
.name { height: 24px; display: flex; align-items: center; gap: 11px; padding-left: 14px; }
.name span { padding-bottom: 18px; }
.type { height: 24px; display: flex; align-items: center; padding: 0 20px 0 2px; }
.type select { flex: 1; font-size: 26px; height: 32px; margin-bottom: 14px; }
.grid-scroll { width: 24px; flex: none; margin-top: 56px; background: #262626; border-left: 2px solid #383838; padding: 15px 5px; }
.grid-scroll .thumb { width: 12px; height: 60px; }
.details-title { padding-left: 28px; height: 26px; line-height: 26px; }
.details { margin-left: 6px; margin-right: 6px; height: 169px; display: flex; padding: 14px 45px 0 20px; background: #323232; border: 2px solid #424242; border-radius: 10px; }
.d-left { flex: 1; }
.row { height: 48px; display: flex; align-items: center; }
.row > label:first-child, .lbl { flex: none; text-align: right; margin-right: 14px; }
.d-left .row > label { width: 187px; }
.d-right { width: 691px; }
.d-right .row > label:first-child, .lbl { width: 156px; }
.charset { width: 416px; margin-right: 16px; }
.collation { flex: 1; }
.comments { flex: 1; height: 29px; display: flex; border: 2px solid #484848; background: #1b1b1b; }
.comments textarea { flex: 1; resize: none; height: 25px; }
.mini { width: 22px; border-left: 2px solid #484848; background: #2b2b2b; padding: 6px 4px 0; }
.mini .thumb { height: 19px; border-radius: 8px 8px 0 0; background: #888; }
.combo { flex: 1; height: 30px; display: flex; align-items: center; padding-right: 3px; background: #3b3b3b; border-radius: 6px; border-bottom: 2px solid #6a6a6a; }
.combo-text { flex: 1; height: 24px; overflow: hidden; }
.combo-text input { width: 100%; height: 36px; padding-left: 6px; }
.combo button { width: 24px; height: 24px; border-radius: 6px; background: #1b5ddb; }
.storage { height: 66px; color: #777; }
.storage .lbl { color: #e4e4e4; }
.storage label { display: flex; align-items: center; gap: 8px; width: 212px; white-space: nowrap; margin-left: -2px; }
input[type="radio"] { width: 24px; height: 24px; border-radius: 50%; background: #484848; }
input[type="radio"]:checked { background: radial-gradient(circle, #888 4px, #484848 5px); }
.bottom-tabs { height: 51px; flex: none; display: flex; border-top: 2px solid #44443f; background: #232323; }
.bottom-tabs button { width: 200px; color: #96999b; border-right: 2px solid #4c4b45; padding-bottom: 2px; }
.bottom-tabs button.active { width: 203px; color: #fff; background: linear-gradient(#35363b, #323634); }

/* templates */
.right { width: 408px; flex: none; border-left: 2px solid #1c1c1c; border-bottom: 2px solid #000; background: #232323; }
.tpl-tools { height: 70px; display: flex; align-items: center; gap: 34px; padding-left: 9px; background: #2b2b2b; border-bottom: 2px solid #000; }
.templates li { height: 100px; display: flex; align-items: center; gap: 18px; padding: 0 0 2px 10px; background: #212121; border-bottom: 1px solid #8c8c8c; }
.templates li:last-child { border-bottom-width: 2px; }
.templates h3 { font: 700 22px/30px "Liberation Sans", Arial, sans-serif; color: #fff; }
.templates p { font: 21px/30px "Open Sans", "Noto Sans", sans-serif; color: #fff; white-space: nowrap; }
```
